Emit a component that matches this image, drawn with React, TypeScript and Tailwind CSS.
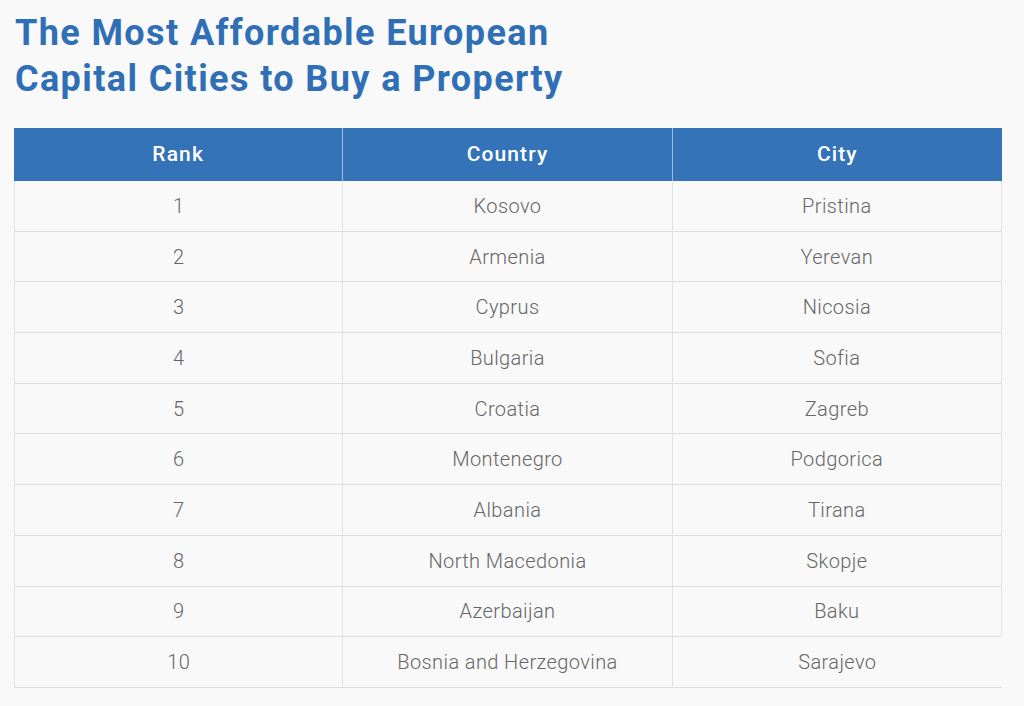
import React from "react";

const rows: [string, string, string][] = [
  ["1", "Kosovo", "Pristina"],
  ["2", "Armenia", "Yerevan"],
  ["3", "Cyprus", "Nicosia"],
  ["4", "Bulgaria", "Sofia"],
  ["5", "Croatia", "Zagreb"],
  ["6", "Montenegro", "Podgorica"],
  ["7", "Albania", "Tirana"],
  ["8", "North Macedonia", "Skopje"],
  ["9", "Azerbaijan", "Baku"],
  ["10", "Bosnia and Herzegovina", "Sarajevo"],
];

export default function App() {
  return (
    <div
      className="w-[1024px] h-[706px] bg-[#f9f9f9] overflow-hidden"
      style={{ fontFamily: "Roboto, 'Liberation Sans', sans-serif" }}
    >
      <div className="pl-[15px] pt-[10px]">
        <h1 className="text-[36px] leading-[46px] font-bold text-[#2f6fb5] tracking-[1.4px]">
          The Most Affordable European
          <br />
          Capital Cities to Buy a Property
        </h1>
      </div>
      <div className="ml-[14px] mt-[26px] w-[988px]">
        <div className="grid grid-cols-3 bg-[#3573b9] h-[53px] text-white text-[21px] font-medium tracking-[1.1px]">
          <div className="flex items-center justify-center border-r border-[#9dbde0]">Rank</div>
          <div className="flex items-center justify-center border-r border-[#9dbde0]">Country</div>
          <div className="flex items-center justify-center">City</div>
        </div>
        {rows.map((r, i) => (
          <div
            key={i}
            className="grid grid-cols-3 h-[50.7px] text-[20px] font-light tracking-[0.4px] text-[#666666] border-b border-[#dedede]"
          >
            <div className="flex items-center justify-center border-l border-r border-[#e2e2e2]">{r[0]}</div>
            <div className="flex items-center justify-center border-r border-[#e2e2e2]">{r[1]}</div>
            <div
              className={
                i === rows.length - 1
                  ? "flex items-center justify-center"
                  : "flex items-center justify-center border-r border-[#e2e2e2]"
              }
            >
              {r[2]}
            </div>
          </div>
        ))}
      </div>
    </div>
  );
}
